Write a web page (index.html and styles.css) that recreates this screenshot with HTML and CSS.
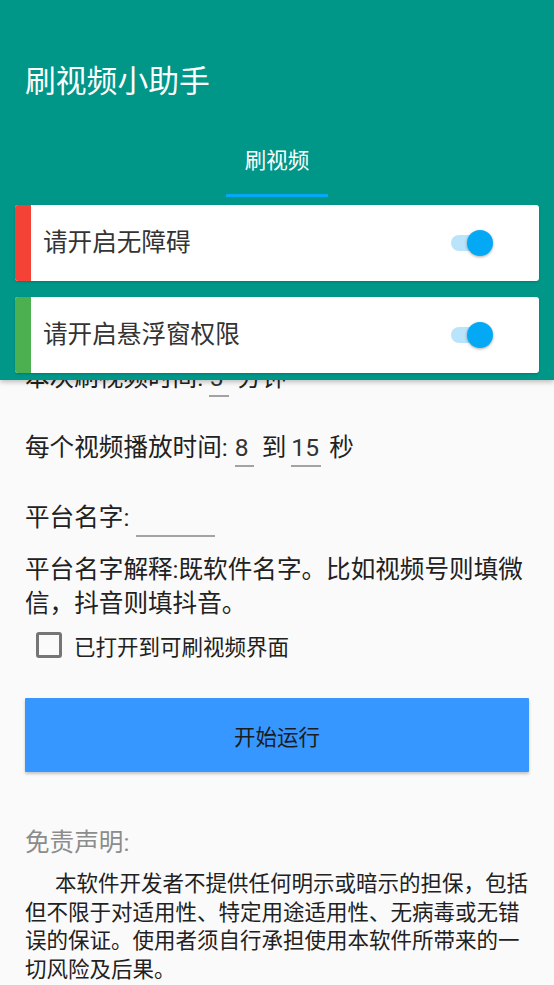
FILE: index.html
```html
<!DOCTYPE html>
<html lang="zh-CN">
<head>
<meta charset="utf-8">
<title>刷视频小助手</title>
<link rel="stylesheet" href="styles.css">
</head>
<body>
<div class="screen">
  <header class="appbar">
    <div class="toolbar"><h1 class="title">刷视频小助手</h1></div>
    <nav class="tabs"><div class="tab active"><span class="tab-label">刷视频</span></div></nav>
    <div class="perm-list">
      <div class="perm-card">
        <span class="perm-bar bar-red"></span>
        <span class="perm-text">请开启无障碍</span>
        <span class="switch"><span class="track"></span><span class="thumb"></span></span>
      </div>
      <div class="perm-card">
        <span class="perm-bar bar-green"></span>
        <span class="perm-text">请开启悬浮窗权限</span>
        <span class="switch"><span class="track"></span><span class="thumb"></span></span>
      </div>
    </div>
  </header>
  <main class="content">
    <div class="field-row">
      <span class="lbl">本次刷视频时间:</span>
      <span class="edit e-min">5</span>
      <span class="lbl gap-after">分钟</span>
    </div>
    <div class="field-row">
      <span class="lbl">每个视频播放时间:</span>
      <span class="edit e-from">8</span>
      <span class="lbl to">到</span>
      <span class="edit e-to">15</span>
      <span class="lbl gap-after">秒</span>
    </div>
    <div class="field-row">
      <span class="lbl">平台名字:</span>
      <span class="edit e-name"></span>
    </div>
    <p class="hint">平台名字解释:既软件名字。比如视频号则填微信，抖音则填抖音。</p>
    <label class="check-row"><span class="checkbox"></span><span class="check-label">已打开到可刷视频界面</span></label>
    <button class="start-btn" type="button">开始运行</button>
    <h2 class="disclaimer-title">免责声明:</h2>
    <p class="disclaimer">本软件开发者不提供任何明示或暗示的担保，包括但不限于对适用性、特定用途适用性、无病毒或无错误的保证。使用者须自行承担使用本软件所带来的一切风险及后果。</p>
  </main>
</div>
</body>
</html>
```
FILE: styles.css
```css
* { box-sizing: border-box; }
html, body { margin: 0; padding: 0; }
body {
  background: #fafafa;
  font-family: Roboto, "Noto Sans CJK SC", sans-serif;
  color: #212121;
  width: 554px;
  height: 985px;
  overflow: hidden;
}
.screen { display: flex; flex-direction: column; }

.appbar {
  position: relative;
  z-index: 2;
  background: #009688;
  height: 380px;
  box-shadow: 0 2px 5px rgba(0,0,0,0.25);
}
.toolbar { height: 123px; padding: 62px 0 0 25px; }
.title {
  margin: 0;
  font-size: 30.8px;
  font-weight: 400;
  line-height: 40px;
  color: #fff;
}
.tabs { display: flex; justify-content: center; height: 74px; }
.tab {
  width: 102px;
  display: flex;
  align-items: center;
  justify-content: center;
  border-bottom: 3px solid transparent;
  padding-top: 4px;
}
.tab.active { border-bottom-color: #03a9f4; }
.tab-label { color: #fff; font-size: 21.5px; line-height: 30px; }

.perm-list { display: flex; flex-direction: column; gap: 16px; padding: 8px 15px 0; }
.perm-card {
  display: flex;
  align-items: center;
  height: 76px;
  background: #fff;
  border-radius: 3px;
  box-shadow: 0 1px 2px rgba(0,0,0,0.18);
}
.perm-bar { align-self: stretch; width: 16px; border-radius: 3px 0 0 3px; }
.bar-red { background: #f44336; }
.bar-green { background: #4caf50; }
.perm-text { margin-left: 12px; font-size: 24.6px; line-height: 34px; color: #333; }
.switch { position: relative; margin-left: auto; margin-right: 46px; width: 42px; height: 26px; }
.track {
  position: absolute; left: 0; top: 5px;
  width: 36px; height: 16px; border-radius: 8px;
  background: #b9e4fb;
}
.thumb {
  position: absolute; right: 0; top: 0;
  width: 26px; height: 26px; border-radius: 50%;
  background: #03a9f4;
  box-shadow: 0 1px 3px rgba(0,0,0,0.35);
}

.content { margin-top: -37px; padding: 0 25px; position: relative; z-index: 1; }
.field-row { display: flex; align-items: flex-start; height: 70px; padding-top: 18px; }
.lbl { font-size: 24.6px; line-height: 34px; color: #212121; white-space: nowrap; }
.edit {
  display: block;
  height: 36px;
  font-size: 24.6px;
  line-height: 34px;
  color: #333;
  border-bottom: 2px solid #a3a3a3;
  margin-left: 6px;
  padding-top: 0;
  text-align: left;
}
.e-min { width: 20px; }
.e-from { width: 19px; margin-left: 7px; }
.e-to { width: 30px; margin-left: 5px; }
.e-name { width: 79px; margin-left: 7px; }
.to { margin-left: 8px; }
.gap-after { margin-left: 8px; }

.hint { margin: 0; font-size: 24.6px; line-height: 34px; color: #212121; }
.check-row { display: flex; align-items: center; height: 48px; }
.checkbox {
  width: 26px; height: 26px; margin-left: 11px;
  border: 3px solid #757575; border-radius: 3px;
}
.check-label { margin-left: 12px; font-size: 21.5px; color: #212121; }

.start-btn {
  display: block;
  width: 100%;
  height: 74px;
  margin-top: 29px;
  border: 0;
  border-radius: 1px;
  background: #3597ff;
  color: #1c1c1c;
  font-family: Roboto, "Noto Sans CJK SC", sans-serif;
  font-size: 21.5px;
  box-shadow: 0 2px 3px rgba(0,0,0,0.22);
}
.disclaimer-title {
  margin: 54px 0 0;
  font-size: 24.6px;
  font-weight: 400;
  line-height: 34px;
  color: #8c8c8c;
}
.disclaimer {
  margin: 10px 0 0;
  font-size: 21.5px;
  line-height: 28.7px;
  text-indent: 30px;
  color: #212121;
}
```
